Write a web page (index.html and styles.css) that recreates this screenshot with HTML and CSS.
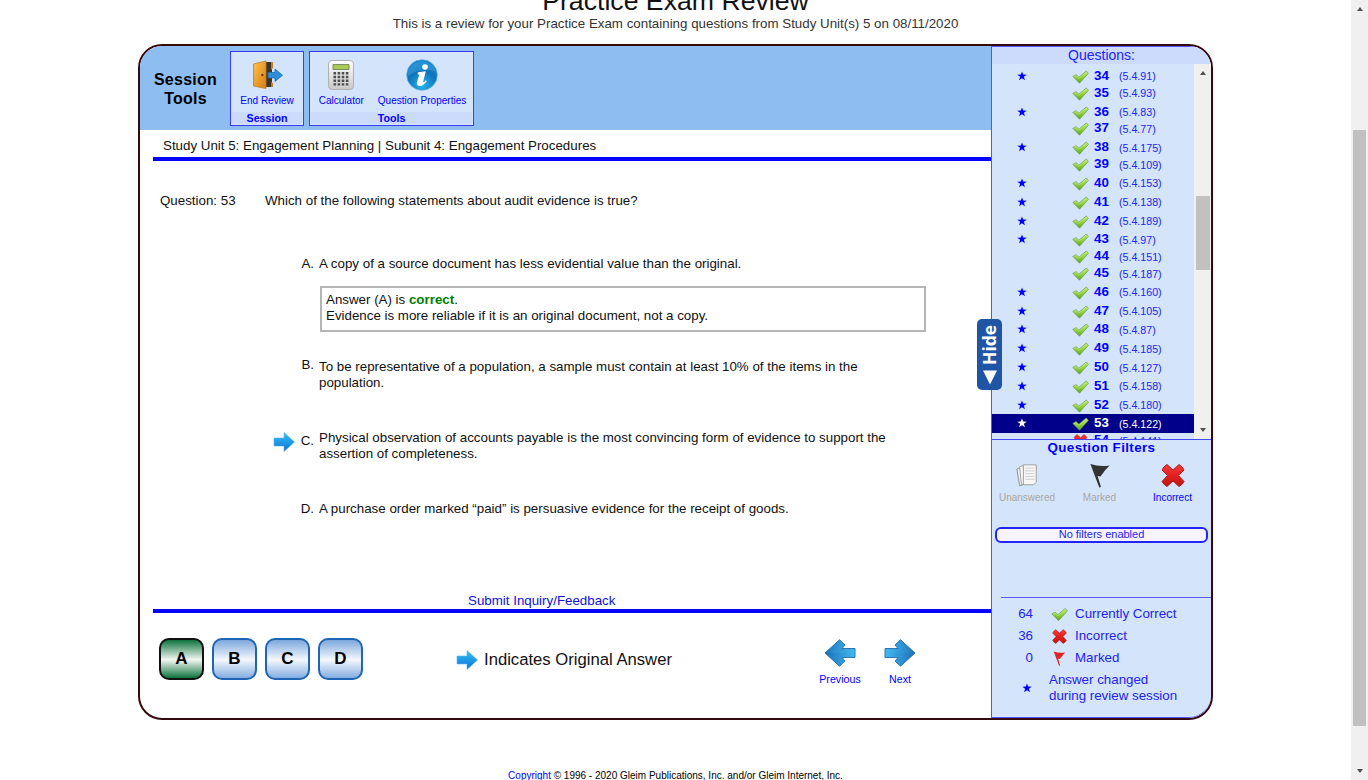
FILE: index.html
```html
<!DOCTYPE html>
<html lang="en">
<head>
<meta charset="utf-8">
<title>Practice Exam Review</title>
<link rel="stylesheet" href="styles.css">
</head>
<body>
<svg class="defs" aria-hidden="true">
  <defs>
    <linearGradient id="gCheck" x1="0" y1="0" x2="0" y2="1"><stop offset="0" stop-color="#c5ec70"/><stop offset=".5" stop-color="#91d43c"/><stop offset="1" stop-color="#5ba51b"/></linearGradient>
    <linearGradient id="gRed" x1="0" y1="0" x2="0" y2="1"><stop offset="0" stop-color="#f23c3a"/><stop offset=".5" stop-color="#e32020"/><stop offset="1" stop-color="#c01414"/></linearGradient>
    <linearGradient id="gSmall" x1="0" y1="0" x2="0" y2="1"><stop offset="0" stop-color="#35c0f8"/><stop offset="1" stop-color="#0a72d6"/></linearGradient>
    <linearGradient id="gNav" x1="0" y1="0" x2="1" y2="0"><stop offset="0" stop-color="#3fbaf0"/><stop offset="1" stop-color="#1e6fb9"/></linearGradient>
    <linearGradient id="gDoor" x1="0" y1="0" x2="1" y2="1"><stop offset="0" stop-color="#ffc34d"/><stop offset="1" stop-color="#d77c13"/></linearGradient>
    <linearGradient id="gCalc" x1="0" y1="0" x2="0" y2="1"><stop offset="0" stop-color="#fff"/><stop offset="1" stop-color="#c9c9c9"/></linearGradient>
    <radialGradient id="gInfo" cx=".5" cy=".85" r=".8"><stop offset="0" stop-color="#25b4ea"/><stop offset=".6" stop-color="#0d75bd"/><stop offset="1" stop-color="#1783cc"/></radialGradient>
    <symbol id="check" viewBox="0 0 17 14"><path d="M.8 6.4 4 4.6l2.9 2.6L14.3.9 16.4 3.4 7.5 13.2Z" fill="url(#gCheck)" stroke="#6c9c55" stroke-width=".7" stroke-linejoin="round"/><path d="M2.2 6.5 3.9 5.5l3 2.8 7.4-6.3" fill="none" stroke="#d0ee97" stroke-width=".5"/></symbol>
    <symbol id="star" viewBox="0 0 10 10"><path d="M5 .4 6.2 3.6 9.7 3.7 6.9 5.8 7.9 9.2 5 7.2 2.1 9.2 3.1 5.8.3 3.7 3.8 3.6Z" fill="currentColor"/></symbol>
    <symbol id="cross" viewBox="0 0 24 24"><path d="M6 1 12 6.500 18 1Q21.500 3 23 6.500L17.500 12 23 18Q21 21.500 18 23L12 17.500 6 23Q2.500 21 1 18L6.500 12 1 6.500Q2.500 3 6 1Z" fill="url(#gRed)" stroke="#b51b1b" stroke-width="1" stroke-linejoin="round"/></symbol>
    <symbol id="smallArrow" viewBox="0 0 22 20"><path d="M1 6H11V.5L21.5 10 11 19.5V14H1Z" fill="url(#gSmall)" stroke="#57b5ee" stroke-width=".6"/></symbol>
    <symbol id="navArrow" viewBox="0 0 32 28"><path d="M1 9.500H14L11 6 16.5.8 31 14 16.5 27.2 11 22 14 18.500H1Z" fill="url(#gNav)" stroke="#2b77b6" stroke-width="1"/><path d="M2 14 28 14 16 2.5 12.7 6 16.5 10H2Z" fill="#4bb5e5" opacity=".15"/></symbol>
    <symbol id="flag" viewBox="0 0 24 26"><path d="M2 1Q12 4.500 22 2.500 17 7 12.500 14L9.500 13.500 13 25 11.200 25.500Z" fill="currentColor"/></symbol>
  </defs>
</svg>

<div class="page">
  <h1 class="title">Practice Exam Review</h1>
  <p class="subtitle">This is a review for your Practice Exam containing questions from Study Unit(s) 5 on 08/11/2020</p>

  <div class="app">
    <div class="frame">
    <main class="main">
      <header class="toolbar">
        <div class="toolbar-title">Session<br>Tools</div>
        <section class="group group-session">
          <div class="group-tools">
            <div class="tool"><svg class="tool-icon" viewBox="0 0 32 32"><path d="M13 3h8v25h-8z" fill="#3b3428"/><path d="M20 3h2v6l-2 2zM20 23l2 1v4h-2z" fill="#c97b21"/><path d="M2.500 5 15 2V29.500L2.500 27Z" fill="url(#gDoor)" stroke="#c27a1d" stroke-width=".8"/><circle cx="11.4" cy="16" r="1.2" fill="#6e3c09"/><path d="M17 13.5h7V10l7.5 6.2-7.5 6.2v-3.500h-7z" fill="#2e8fd8" stroke="#1e6dad" stroke-width=".8"/></svg><span>End Review</span></div>
          </div>
          <div class="group-label">Session</div>
        </section>
        <section class="group group-tools-box">
          <div class="group-tools">
            <div class="tool tool-calc"><svg class="tool-icon" viewBox="0 0 32 32"><rect x="3.500" y="1.500" width="25" height="29" rx="3.5" fill="url(#gCalc)" stroke="#b0b0b0"/><path d="M8 5.500h16v5H8z" fill="#a9c957" stroke="#65784a" stroke-width=".8"/><path d="M8.5 14.3h15M8.5 18h15M8.5 21.7h15M8.5 25.4h15" stroke="#4d4d4d" stroke-width="2.4" stroke-dasharray="2.6 1.5"/></svg><span>Calculator</span></div>
            <div class="tool tool-info"><svg class="tool-icon" viewBox="0 0 32 32"><circle cx="16" cy="16" r="15.3" fill="url(#gInfo)" stroke="#5aaee4" stroke-width=".7"/><path d="M2 13C6-1 26-1 30 13 21 9 12 10 2 17Z" fill="#51b4ea" opacity=".35"/><circle cx="19" cy="8" r="2.8" fill="#fff"/><path d="M12 13.3 19.8 12.3 17 23.3Q18.500 23.3 19.8 21.3L20.8 22.3Q17 27.5 13.2 27Q10 26.5 11 23L13.2 15.7 11.600 15.2Z" fill="#fff"/></svg><span>Question Properties</span></div>
          </div>
          <div class="group-label">Tools</div>
        </section>
      </header>

      <div class="breadcrumb">Study Unit 5: Engagement Planning | Subunit 4: Engagement Procedures</div>

      <div class="question">
        <div class="question-no">Question: 53</div>
        <div>Which of the following statements about audit evidence is true?</div>
      </div>

      <div class="options">
        <div class="option option-a">
          <div class="letter">A.</div>
          <div class="answer">A copy of a source document has less evidential value than the original.
            <div class="explain">Answer (A) is <b>correct</b>.<br>Evidence is more reliable if it is an original document, not a copy.</div>
          </div>
        </div>
        <div class="option option-b"><div class="letter">B.</div><div class="answer">To be representative of a population, a sample must contain at least 10% of the items in the<br>population.</div></div>
        <div class="option option-c"><svg class="small-arrow"><use href="#smallArrow"/></svg><div class="letter">C.</div><div class="answer">Physical observation of accounts payable is the most convincing form of evidence to support the<br>assertion of completeness.</div></div>
        <div class="option option-d"><div class="letter">D.</div><div class="answer">A purchase order marked “paid” is persuasive evidence for the receipt of goods.</div></div>
      </div>

      <div class="feedback"><a>Submit Inquiry/Feedback</a></div>

      <footer class="controls">
        <div class="choices">
          <div class="choice choice-correct">A</div><div class="choice">B</div><div class="choice">C</div><div class="choice">D</div>
        </div>
        <div class="indicator"><svg class="small-arrow"><use href="#smallArrow"/></svg>Indicates Original Answer</div>
        <div class="nav">
          <div class="nav-item"><svg class="nav-icon nav-prev"><use href="#navArrow"/></svg>Previous</div>
          <div class="nav-item"><svg class="nav-icon"><use href="#navArrow"/></svg>Next</div>
        </div>
      </footer>
    </main>

    <aside class="sidebar">
      <div class="side-head">Questions:</div>
      <div class="list-wrap">
        <div class="list">
          <div class="row starred"><svg class="star"><use href="#star"/></svg><svg class="check"><use href="#check"/></svg><b>34</b><span>(5.4.91)</span></div>
          <div class="row"><svg class="check"><use href="#check"/></svg><b>35</b><span>(5.4.93)</span></div>
          <div class="row starred"><svg class="star"><use href="#star"/></svg><svg class="check"><use href="#check"/></svg><b>36</b><span>(5.4.83)</span></div>
          <div class="row"><svg class="check"><use href="#check"/></svg><b>37</b><span>(5.4.77)</span></div>
          <div class="row starred"><svg class="star"><use href="#star"/></svg><svg class="check"><use href="#check"/></svg><b>38</b><span>(5.4.175)</span></div>
          <div class="row"><svg class="check"><use href="#check"/></svg><b>39</b><span>(5.4.109)</span></div>
          <div class="row starred"><svg class="star"><use href="#star"/></svg><svg class="check"><use href="#check"/></svg><b>40</b><span>(5.4.153)</span></div>
          <div class="row starred"><svg class="star"><use href="#star"/></svg><svg class="check"><use href="#check"/></svg><b>41</b><span>(5.4.138)</span></div>
          <div class="row starred"><svg class="star"><use href="#star"/></svg><svg class="check"><use href="#check"/></svg><b>42</b><span>(5.4.189)</span></div>
          <div class="row starred"><svg class="star"><use href="#star"/></svg><svg class="check"><use href="#check"/></svg><b>43</b><span>(5.4.97)</span></div>
          <div class="row"><svg class="check"><use href="#check"/></svg><b>44</b><span>(5.4.151)</span></div>
          <div class="row"><svg class="check"><use href="#check"/></svg><b>45</b><span>(5.4.187)</span></div>
          <div class="row starred"><svg class="star"><use href="#star"/></svg><svg class="check"><use href="#check"/></svg><b>46</b><span>(5.4.160)</span></div>
          <div class="row starred"><svg class="star"><use href="#star"/></svg><svg class="check"><use href="#check"/></svg><b>47</b><span>(5.4.105)</span></div>
          <div class="row starred"><svg class="star"><use href="#star"/></svg><svg class="check"><use href="#check"/></svg><b>48</b><span>(5.4.87)</span></div>
          <div class="row starred"><svg class="star"><use href="#star"/></svg><svg class="check"><use href="#check"/></svg><b>49</b><span>(5.4.185)</span></div>
          <div class="row starred"><svg class="star"><use href="#star"/></svg><svg class="check"><use href="#check"/></svg><b>50</b><span>(5.4.127)</span></div>
          <div class="row starred"><svg class="star"><use href="#star"/></svg><svg class="check"><use href="#check"/></svg><b>51</b><span>(5.4.158)</span></div>
          <div class="row starred"><svg class="star"><use href="#star"/></svg><svg class="check"><use href="#check"/></svg><b>52</b><span>(5.4.180)</span></div>
          <div class="row starred current"><svg class="star"><use href="#star"/></svg><svg class="check"><use href="#check"/></svg><b>53</b><span>(5.4.122)</span></div>
          <div class="row"><svg class="check"><use href="#cross"/></svg><b>54</b><span>(5.4.141)</span></div>
        </div>
        <div class="scroll list-scroll"><i class="up"></i><i class="thumb"></i><i class="down"></i></div>
      </div>
      <section class="filters">
        <h2 class="filters-title">Question Filters</h2>
        <div class="filter-row">
          <div class="filter off"><svg class="filter-icon" viewBox="0 0 26 26"><path d="M2 6 6 4.5 9 23 5 24Z" fill="#f2f2f2" stroke="#888"/><path d="M5 3.5 9 2 10 22 7 23Z" fill="#fff" stroke="#999"/><path d="M9 1.5H23V20.5L20 23H9Z" fill="#f8f8f8" stroke="#999"/><path d="M11 5h10M11 8h10M11 11h10M11 14h10M11 17h10" stroke="#c9c9c9"/></svg>Unanswered</div>
          <div class="filter off"><svg class="filter-icon flag-dark"><use href="#flag"/></svg>Marked</div>
          <div class="filter"><svg class="filter-icon"><use href="#cross"/></svg>Incorrect</div>
        </div>
        <div class="filter-status">No filters enabled</div>
      </section>
      <section class="legend">
        <div class="legend-row"><span class="count">64</span><svg class="legend-icon"><use href="#check"/></svg>Currently Correct</div>
        <div class="legend-row"><span class="count">36</span><svg class="legend-icon"><use href="#cross"/></svg>Incorrect</div>
        <div class="legend-row"><span class="count">0</span><svg class="legend-icon flag-red"><use href="#flag"/></svg>Marked</div>
        <div class="legend-note"><svg class="star"><use href="#star"/></svg><span>Answer changed<br>during review session</span></div>
      </section>
    </aside>
    </div>
    <div class="hide-tab"><span>Hide</span><svg viewBox="0 0 14 14"><path d="M0 0H14L7 14Z" fill="#fff"/></svg></div>
  </div>

  <p class="copyright"><a>Copyright</a> © 1996 - 2020 Gleim Publications, Inc. and/or Gleim Internet, Inc.</p>
</div>
<div class="scroll page-scroll"><i class="up"></i><i class="thumb"></i><i class="down"></i></div>
</body>
</html>
```
FILE: styles.css
```css
* { box-sizing: border-box; }

body {
  margin: 0;
  display: flex;
  width: 1368px;
  height: 780px;
  overflow: hidden;
  background: #fff;
  color: #111;
  font: 13.333px/16px "Liberation Sans", Arial, sans-serif;
}

svg { display: block; flex: none; }
.defs { position: absolute; width: 0; height: 0; }
a { color: #1111d8; }

.page { width: 1351px; height: 780px; overflow: hidden; }
.title { margin: -14px 0 0; font-size: 26.67px; font-weight: 400; line-height: 30px; text-align: center; }
.subtitle { margin: 0 0 12px; color: #333; text-align: center; }

.app { position: relative; width: 1075px; height: 676px; margin-left: 138px; }
.frame {
  display: flex;
  height: 100%;
  border: 2px solid #360a0c;
  border-radius: 24px;
  overflow: hidden;
}

/* Main column */
.main { display: flex; flex-direction: column; width: 851px; }

.toolbar { display: flex; height: 84px; padding-top: 5px; background: #8ebef1; }
.toolbar-title {
  width: 90px;
  padding: 19px 0 0 1px;
  color: #000;
  font-size: 16px;
  font-weight: bold;
  letter-spacing: .25px;
  line-height: 19px;
  text-align: center;
}
.group {
  display: flex;
  flex-direction: column;
  justify-content: space-between;
  height: 75px;
  padding: 7px 1px 1px;
  border: 1px solid #3a3aff;
  background: #d4e5fb;
  color: #00f;
}
.group-session { width: 74px; margin-right: 5px; }
.group-tools-box { width: 165px; }
.group-tools { display: flex; justify-content: center; }
.tool { display: flex; flex-direction: column; align-items: center; font-size: 10px; line-height: 12px; white-space: nowrap; }
.tool-icon { width: 32px; height: 32px; margin-bottom: 4px; }
.tool-calc { margin: 0 14px 0 2px; }
.group-label { height: 12px; background: #ccdafc; font-size: 10.67px; font-weight: bold; line-height: 12px; text-align: center; }

.breadcrumb { height: 31px; margin-left: 13px; padding: 8px 0 0 10px; border-bottom: 4px solid #00f; }
.question { display: flex; margin-top: 32px; padding-left: 20px; }
.question-no { width: 105px; }

.options { height: 384px; padding: 47px 0 0 133px; }
.option { display: flex; }
.letter { width: 46px; padding-right: 5px; text-align: right; }
.option-a { height: 103px; }
.option-b { height: 71px; }
.option-b .letter { margin-top: -2px; }
.option-c { height: 71px; }
.option-c .small-arrow { margin-top: 2px; }
.option-c .letter { width: 24px; padding-top: 3px; }
.explain {
  width: 606px;
  height: 46px;
  margin: 14px 0 0 1px;
  padding: 4px 0 0 4px;
  border: 2px solid #b5b5b5;
}
.explain b { color: #008000; }
.small-arrow { width: 22px; height: 20px; }

.feedback { height: 20px; margin-left: 13px; padding-left: 315px; border-bottom: 4px solid #00f; }
.controls { display: flex; padding: 25px 0 0 19px; }
.choices { display: flex; gap: 8px; }
.choice {
  width: 45px;
  height: 42px;
  border: 2px solid #1d66b5;
  border-radius: 10px;
  background: linear-gradient(#7ca7dc, #f5f8fd 52%, #84ade0);
  color: #000;
  font-size: 17px;
  font-weight: bold;
  line-height: 38px;
  text-align: center;
}
.choice-correct { border-color: #111; background: linear-gradient(#0d733d, #f3f7f3 52%, #0d733d); }
.indicator {
  display: flex;
  align-items: center;
  gap: 6px;
  width: 354px;
  height: 44px;
  margin-left: 93px;
  font-size: 16.67px;
}
.nav { display: flex; color: #00f; font-size: 10.67px; line-height: 14px; }
.nav-item { display: flex; flex-direction: column; align-items: center; width: 60px; }
.nav-icon { width: 32px; height: 28px; margin: 1px 0 5px; }
.nav-prev { transform: scaleX(-1); }

/* Sidebar */
.sidebar {
  display: flex;
  flex-direction: column;
  width: 220px;
  height: 672px;
  border: 1px solid #5454ff;
  border-right: 0;
  border-bottom-right-radius: 22px;
  background: #d4e5fb;
  color: #2323f0;
}
.side-head { height: 17px; background: #ccdafc; font-size: 14px; line-height: 17px; text-align: center; }
.list-wrap { display: flex; height: 375px; }
.list { width: 202px; height: 375px; padding-top: 2.6px; overflow: hidden; }
.row { display: flex; align-items: center; height: 16.87px; padding: 0 0 2px 80px; }
.starred { height: 18.81px; padding: 0 0 0 25px; }
.row .star { margin-right: 45px; color: #00f; }
.star { width: 10px; height: 10px; }
.check { width: 17px; height: 14px; margin: 2px 5px 0 0; }
.row b { width: 25px; color: #00f; }
.row span { padding-top: 1px; font-size: 10.67px; }
.current { background: #00008b; }
.row.current .star, .current b, .current span { color: #fff; }

.filters { height: 158px; border-top: 1px solid #4646ff; }
.filters-title { margin: 0; color: #00f; font-size: 13.333px; letter-spacing: .4px; line-height: 16px; text-align: center; }
.filter-row { display: flex; margin-top: 7px; }
.filter { display: flex; flex-direction: column; align-items: center; width: 73px; color: #00f; font-size: 10px; line-height: 14px; }
.filter:first-child { width: 70px; margin-right: 1px; }
.off { color: #aaa69d; }
.filter-icon { width: 24px; height: 25px; margin-bottom: 3px; }
.flag-dark { color: #333; }
.filter-status {
  height: 16px;
  margin: 22px 3px 0;
  border: 2px solid #2323ff;
  border-radius: 6px;
  background: #f7f4ff;
  font-size: 11px;
  line-height: 11px;
  text-align: center;
}
.legend { margin-left: 9px; padding-top: 5px; border-top: 1px solid #5a5af8; }
.legend-row { display: flex; align-items: center; height: 22px; }
.count { width: 32px; text-align: right; }
.legend-icon { width: 17px; height: 15px; margin: 0 7px 0 18px; }
.flag-red { color: #e22424; }
.legend-note { display: flex; align-items: center; margin-top: 3px; }
.legend-note .star { margin: 0 17px 0 21px; color: #00f; }

/* Tab overlapping the sidebar edge */
.hide-tab {
  position: absolute;
  left: 839px;
  top: 275px;
  display: flex;
  flex-direction: column;
  align-items: center;
  gap: 5px;
  width: 25px;
  height: 71px;
  padding-top: 4px;
  border-radius: 5px;
  background: #2055a5;
  color: #fff;
}
.hide-tab span { height: 42px; padding-left: 2px; font: bold 17.5px/22px "Open Sans", "Noto Sans", sans-serif; writing-mode: vertical-rl; transform: rotate(180deg); }
.hide-tab svg { width: 14px; height: 15px; }

/* Scrollbars */
.scroll { display: flex; flex-direction: column; align-items: center; width: 17px; background: #f0f0f0; }
.up, .down { border: 3.5px solid transparent; }
.up { border-top: 0; border-bottom: 4px solid #505050; }
.down { margin-top: auto; border-bottom: 0; border-top: 4px solid #505050; }
.thumb { background: #c1c1c1; }
.list-scroll { height: 375px; padding: 7px 0; }
.list-scroll .thumb { width: 14px; height: 74px; margin-top: 121px; }
.page-scroll { height: 780px; padding: 7px 0; }
.page-scroll .thumb { width: 13px; height: 596px; margin-top: 119px; }

.copyright { margin: 48px 0 0; color: #000; font-size: 10px; text-align: center; }
.copyright a { color: #00f; }
```
